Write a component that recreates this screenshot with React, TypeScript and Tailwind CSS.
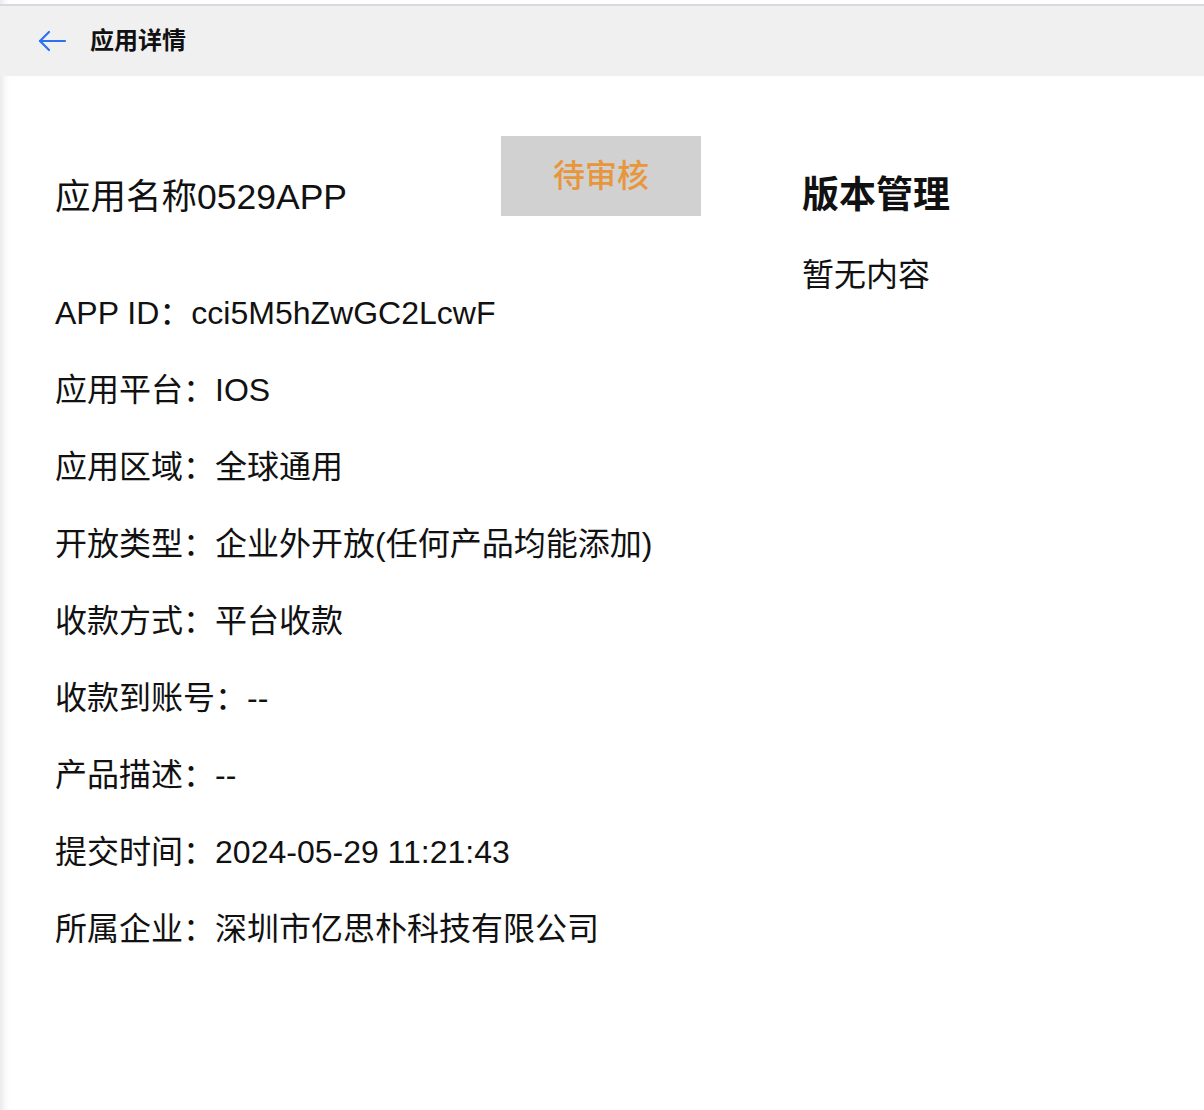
import React from "react";

const rows: [string, string][] = [
  ["APP ID", "cci5M5hZwGC2LcwF"],
  ["应用平台", "IOS"],
  ["应用区域", "全球通用"],
  ["开放类型", "企业外开放(任何产品均能添加)"],
  ["收款方式", "平台收款"],
  ["收款到账号", "--"],
  ["产品描述", "--"],
  ["提交时间", "2024-05-29 11:21:43"],
  ["所属企业", "深圳市亿思朴科技有限公司"],
];

const BackArrow = () => (
  <svg width="30" height="24" viewBox="0 0 30 24" fill="none" stroke="#2a72f0" strokeWidth="2.2" strokeLinecap="round" strokeLinejoin="round">
    <path d="M3 12H28" />
    <path d="M12 3L3 12L12 21" />
  </svg>
);

const App = () => {
  return (
    <div
      className="min-h-[1110px] w-full bg-white text-[#111] shadow-[inset_9px_0_8px_-7px_rgba(0,0,0,0.12)]"
      style={{ fontFamily: '"Liberation Sans", "Noto Sans CJK SC", sans-serif' }}
    >
      <div className="pt-[4px]">
        <div className="h-[2px] bg-[#d9d9e3]" />
        <header className="flex h-[70px] items-center bg-[#f0f0f0] pl-[37px]">
          <BackArrow />
          <h1 className="ml-[23px] text-[24px] font-bold leading-none text-[#111]">应用详情</h1>
        </header>
      </div>

      <main className="flex pl-[55px] pt-[60px]">
        <section className="w-[646px]">
          <div className="flex items-start justify-between">
            <h2 className="mt-[41px] text-[35.5px] leading-[40px]">应用名称0529APP</h2>
            <span className="flex h-[80px] w-[200px] items-center justify-center bg-[#d1d1d1] text-[32px] font-medium text-[#e8963c]">
              待审核
            </span>
          </div>
          <div className="mt-[76px] flex flex-col gap-[37px]">
            {rows.map(([label, value]) => (
              <p key={label} className="whitespace-nowrap text-[32px] leading-[40px]">
                {label}：{value}
              </p>
            ))}
          </div>
        </section>

        <aside className="ml-[101px] pt-[38px]">
          <h2 className="text-[37px] font-bold leading-[44px]">版本管理</h2>
          <p className="mt-[37px] text-[32px] leading-[40px]">暂无内容</p>
        </aside>
      </main>
    </div>
  );
};

export default App;
